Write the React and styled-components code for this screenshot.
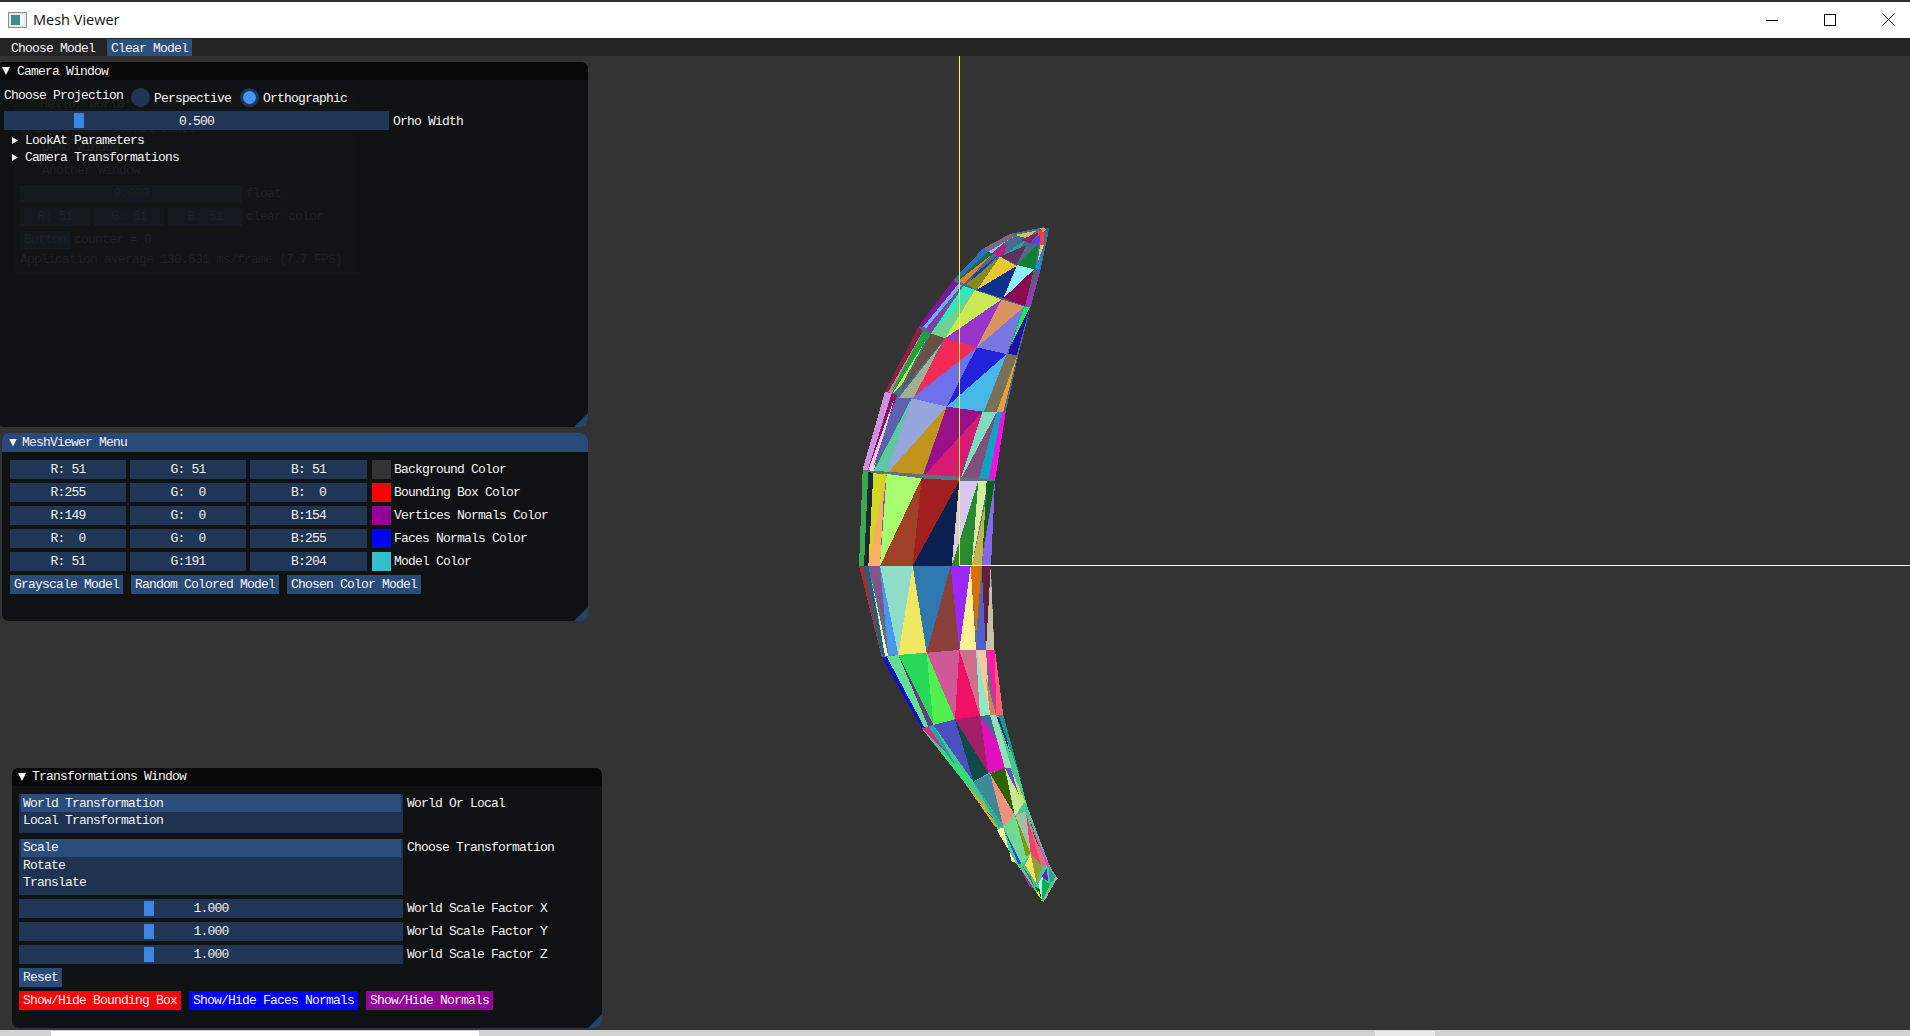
import React from "react";
import styled, { createGlobalStyle } from "styled-components";

const Global = createGlobalStyle`
  html, body { margin: 0; padding: 0; height: 100%; overflow: hidden; background: #333; }
  #root { height: 100%; }
`;

const Shell = styled.div`
  height: 1036px; width: 1910px; display: flex; flex-direction: column;
  font-family: "Liberation Mono", monospace; font-size: 13px; letter-spacing: -0.8px; color: #f2f2f2;
`;
const TitleBar = styled.header`
  height: 38px; box-sizing: border-box; flex: none; background: #fff; border-top: 2px solid #2e2e2e;
  display: flex; align-items: center; padding-left: 8px; color: #111;
  font-family: "Open Sans", sans-serif; font-size: 14.5px; letter-spacing: 0;
`;
const AppName = styled.span` margin-left: 6px; flex: 1; margin-top: -2px; `;
const WinButton = styled.button`
  width: 58px; height: 36px; border: 0; background: none; padding: 0; display: flex; align-items: center; justify-content: center;
`;
const WinButtons = styled.div` display: flex; margin-right: -7px; margin-top: -1px; `;

const MenuBar = styled.nav`
  height: 18px; flex: none; background: #242424; display: flex; gap: 8px; padding-left: 7px;
`;
const MenuItem = styled.span`
  padding: 0 4px; height: 17px; margin-top: 1px; line-height: 19px; white-space: pre;
  background: ${p => (p.$active ? "#2c4f80" : "transparent")};
`;
const Canvas = styled.main` flex: 1; position: relative; overflow: hidden; background: #333; `;
const Scene = styled.svg` position: absolute; inset: 0; width: 100%; height: 100%; `;
const ScrollTrack = styled.div`
  height: 6px; flex: none; background: #d2d2d2; display: flex; padding-top: 1px; box-sizing: border-box;
`;
const ScrollThumb = styled.div`
  height: 5px; width: ${p => p.$w}px; margin-left: ${p => p.$ml}px; background: ${p => p.$c};
`;

const Win = styled.section`
  position: absolute; box-sizing: border-box; overflow: hidden;
  left: ${p => p.$l}px; top: ${p => p.$t}px; width: ${p => p.$w}px; height: ${p => p.$h}px;
  background: #101113; border-radius: 7px;
`;
const WinTitle = styled.div`
  height: ${p => p.$h || 18}px; background: ${p => (p.$active ? "#29497b" : "#080808")};
  display: flex; align-items: center; padding-left: ${p => p.$caret}px; line-height: 20px; white-space: pre;
`;
const TitleText = styled.span` margin-top: 1px; `;
const Caret = styled.i`
  width: 8px; height: 8px; background: #f4f4f4; clip-path: polygon(0 0, 100% 0, 50% 100%); margin-right: ${p => p.$gap}px; flex: none;
`;
const WinBody = styled.div`
  position: relative; display: flex; flex-direction: column; padding: ${p => p.$pt}px 0 0 ${p => p.$pl}px; gap: 4px;
`;
const Grip = styled.i`
  position: absolute; right: 0; bottom: 0; width: 14px; height: 14px; background: #234468;
  clip-path: polygon(100% 0, 100% 100%, 0 100%);
`;

const Row = styled.div`
  display: flex; align-items: center; height: ${p => p.$h || 19}px; gap: 4px; white-space: pre; position: relative; z-index: 1;
`;
const Label = styled.span` line-height: 19px; white-space: pre; margin-top: ${p => p.$dy || 0}px; `;
const ProjectionLabel = styled(Label)` margin-top: -5px; margin-right: 4px; `;
const RadioDot = styled.span`
  width: 19px; height: 19px; border-radius: 50%; background: #203556; display: flex; align-items: center; justify-content: center; flex: none;
  &::after { content: ""; width: 13px; height: 13px; border-radius: 50%; background: ${p => (p.$on ? "#4296fa" : "transparent")}; }
`;
const RadioGroup = styled.span` display: flex; align-items: center; gap: 3px; margin-right: 5px; `;
const RadioText = styled.span` margin-top: 1px; margin-left: 1px; `;
const Track = styled.div`
  position: relative; width: ${p => p.$w}px; height: 19px; background: #213554; flex: none; box-sizing: border-box;
  padding-top: ${p => p.$dy || 0}px;
  display: flex; align-items: center; justify-content: center; line-height: 19px;
`;
const Grab = styled.i`
  position: absolute; top: 2px; height: 15px; width: 10px; left: ${p => p.$x}px; background: #3d85e0;
`;
const Tree = styled.div` display: flex; flex-direction: column; margin-top: -2px; position: relative; z-index: 1; `;
const TreeNode = styled.div` height: 17px; line-height: 18px; display: flex; align-items: center; padding-left: 8px; white-space: pre; `;
const TreeArrow = styled.i`
  width: 6px; height: 7px; background: #f4f4f4; clip-path: polygon(0 0, 100% 50%, 0 100%); margin-right: 7px; flex: none;
`;
const Cell = styled.div`
  width: ${p => p.$w || 116}px; height: 19px; background: #213554; text-align: center; line-height: 19px; white-space: pre; flex: none;
`;
const Swatch = styled.i` width: 19px; height: 19px; background: ${p => p.$c}; flex: none; margin-left: 1px; margin-right: -1px; `;
const Btn = styled.button`
  font: inherit; letter-spacing: inherit; color: #f4f4f4; border: 0; height: 19px; padding: 0 4px; width: ${p => p.$w}px; white-space: pre; text-align: center;
  background: ${p => p.$c || "#2a4a78"}; flex: none;
`;
const BtnRow = styled.div` display: flex; gap: 8px; `;
const List = styled.div`
  width: 384px; height: ${p => p.$h}px; background: #1f3350; padding: 0 2px; box-sizing: border-box; flex: none;
`;
const ListItem = styled.div`
  height: 17px; line-height: 17px; padding-left: 2px; white-space: pre; background: ${p => (p.$on ? "#2b4d7e" : "transparent")};
  &:first-child { height: 18px; line-height: ${p => p.$lh || 19}px; }
`;
const ListRow = styled.div` display: flex; gap: 4px; align-items: flex-start; margin-bottom: ${p => p.$mb || 0}px; line-height: ${p => p.$lh || 19}px; white-space: pre; `;

const Ghost = styled.div`
  position: absolute; left: 17px; top: 16px; width: 345px; height: 178px; background: #121315; color: #1f2022;
  display: flex; flex-direction: column; padding-left: 6px; box-sizing: border-box;
`;
const GhostLine = styled.div`
  height: 18px; line-height: 18px; margin-top: ${p => p.$mt || 0}px; padding-left: ${p => p.$pl || 0}px; white-space: pre; display: flex; gap: 4px;
`;
const GhostBox = styled.span`
  width: ${p => p.$w}px; background: #14181f; text-align: center; display: block; height: 18px;
`;

const g1 = [
  ["#4a6a90","610,52 510,72 430,115 340,210 235,350 135,545 68,780 85,812 465,812 497,607 535,435 572,290 602,178 628,55"],
  ["#cf8fe0","135,545 155,550 82,785 68,778"],["#8a1860","155,550 172,556 100,745 88,765"],["#efc8ec","165,560 100,785 85,785 92,760"],
  ["#6060b0","172,556 215,565 100,770"],["#5cc8a0","215,565 100,785 140,792"],["#97a5dd","215,565 320,590 140,792"],
  ["#c2941c","320,590 245,805 140,792"],["#9a0f8a","320,590 428,605 248,802"],["#d81b72","428,605 358,812 245,805"],
  ["#7fdcc0","428,605 470,607 360,812"],["#80507a","470,607 415,812 360,812"],["#12a0c4","470,607 485,607 445,812 415,812"],
  ["#f010e0","485,607 497,607 465,812 445,812"],
  ["#8a2048","235,350 248,362 150,545 135,545"],["#b09070","248,365 155,550 145,545"],["#20a040","250,362 272,372 170,525 155,542"],
  ["#b0f040","255,395 158,550 185,525"],["#6a5040","272,372 315,385 185,540"],["#a0b090","305,400 175,565 220,565"],
  ["#f52a55","315,385 410,412 220,565"],["#7070e8","410,412 320,590 215,565"],["#2222dd","410,412 500,432 320,590"],
  ["#45b8e8","500,432 432,605 320,590"],["#7a7058","500,432 532,436 475,605 432,605"],["#e8a030","532,436 490,605 470,605"],
  ["#7a1a9a","340,210 355,222 250,350 235,350"],["#6ab0f0","355,222 366,226 258,355 250,350"],["#8a3aa0","366,226 272,368 258,355"],
  ["#30e8c0","370,228 405,240 275,368"],["#70d090","405,240 315,385 272,370"],["#c8e855","405,240 485,268 315,385"],
  ["#9a35cc","485,268 410,412 315,385"],["#d89560","485,268 553,290 410,412"],["#7a78e0","553,290 500,432 410,412"],
  ["#10f050","553,290 570,290 510,412"],["#2010a0","570,290 530,435 505,432 510,412"],
  ["#2a70c0","430,115 445,125 355,205 340,210"],["#1a6a40","445,125 460,130 370,205 355,208"],["#e08030","460,130 370,222 355,212"],
  ["#1040b0","475,135 385,225 400,195"],["#8a8a10","480,140 380,222 408,240"],["#e8c830","480,140 530,168 410,240"],
  ["#103090","530,168 490,265 410,240"],["#90f0ff","595,105 582,178 490,265 530,168"],["#8a0a50","582,178 555,288 490,265"],
  ["#a030c0","582,178 600,178 570,290 555,288"],["#208050","582,178 594,180 565,265"],
  ["#7a6a80","430,115 510,72 530,75 445,125"],["#8fb8e8","445,125 530,75 490,100 455,130"],["#c01880","455,130 500,100 490,140"],
  ["#20a8a0","490,135 560,88 540,115"],["#603060","480,140 560,105 530,165"],["#108030","530,165 595,100 585,178"],
  ["#d0c060","525,75 590,62 560,85"],["#8a2070","540,90 600,66 570,100"],
  ["#f04040","592,65 612,60 612,105 600,105"],["#6040e0","570,100 600,75 598,105"],["#e09070","600,55 620,55 610,68"],
  ["#207050","615,55 628,55 625,68"],["#e0c080","600,105 612,105 590,178"],["#1890d0","612,105 600,178 585,178"],
];
const g2 = [
  ["#607080","68,-30 465,-2 453,258 463,510 490,705 245,745 125,530 57,258"],
  ["#3aa850","68,-30 85,-25 72,258 57,258"],["#1a2a30","85,-25 100,-20 85,258 72,258"],["#d0d820","100,-20 140,-18 105,258 85,258"],
  ["#f8b060","135,-18 120,258 85,258"],["#a8ff70","140,-18 245,-5 120,258"],["#a04028","245,-5 218,258 120,258"],
  ["#a02020","245,-5 358,2 218,258"],["#0a2050","358,2 335,258 218,258"],["#d8c8f0","358,2 415,2 335,258"],
  ["#2a8a30","415,2 395,258 335,258"],["#d0f0a0","415,2 445,2 395,258"],["#c8b050","445,30 425,258 395,258"],
  ["#0a6020","440,2 465,2 428,220"],["#8866ee","465,2 453,258 425,258"],
  ["#a03030","57,258 72,258 125,525"],["#206080","72,258 85,258 135,528 125,525"],["#80558a","85,258 120,258 145,470"],
  ["#f6f0b0","95,300 145,530 135,528"],["#4898f0","120,258 175,525 145,528"],["#90dcc8","120,258 218,258 175,525"],
  ["#f0e860","218,258 260,518 175,525"],["#2e78b0","218,258 332,258 260,518"],["#8a4038","332,258 358,510 260,518"],
  ["#9a28ff","332,258 392,258 358,510"],["#fff090","392,258 408,510 358,510"],["#d87000","392,258 425,258 408,470"],
  ["#5060d0","425,300 438,510 408,510"],["#602040","425,258 452,258 438,510 432,400"],["#c8c0a0","452,262 463,510 438,510"],
  ["#0a10d0","125,530 140,530 255,745 245,745"],["#60e090","140,530 175,525 265,740 255,745"],["#6a3a8a","175,525 185,530 280,735 265,740"],
  ["#28d858","175,525 260,518 280,735"],["#50f050","260,518 345,718 280,735"],["#d05898","260,518 358,510 345,718"],
  ["#f01068","358,510 420,708 345,718"],["#d07088","358,510 408,510 420,708"],["#90e8c0","408,510 450,705 420,708"],
  ["#f8c8a0","408,510 438,510 450,705"],["#d08060","438,590 468,705 450,705"],["#ff1ca8","438,510 465,510 468,705"],["#ff6070","465,510 490,705 468,705"],
];
const g3 = [
  ["#46c890","-55,-35 190,-75 262,200 330,380 352,415 310,487 228,370 175,270 75,130"],
  ["#d8288a","-55,-35 -35,-40 40,60 20,40"],["#20a8a0","-35,-40 -20,-45 75,125 50,85"],
  ["#30e070","0,30 100,125 75,130"],
  ["#4a50c0","-20,-45 45,-62 100,125"],["#104a48","45,-62 145,100 100,125"],["#a02068","45,-62 120,-72 145,100"],
  ["#e010c0","120,-72 150,-75 195,85 145,100"],["#406a90","120,-72 150,-75 170,0"],["#90e0b0","150,-75 168,-75 215,85 195,85"],
  ["#103080","170,-70 185,-70 210,40"],["#209090","175,-75 190,-75 262,190 240,110"],
  ["#c0b030","75,130 130,190 175,265 165,260"],["#b02030","100,170 185,265 160,235"],["#30b090","100,125 190,262 175,260"],
  ["#3a8a98","100,125 150,100 190,260"],["#306000","150,100 195,85 225,225"],["#f09080","150,100 225,225 190,260"],
  ["#c8e890","195,85 250,190 225,230"],["#6050d0","195,85 212,85 240,170"],["#d0e060","212,85 258,190 245,190"],
  ["#70d890","190,260 225,225 270,345 245,372"],["#7a9a10","225,225 272,340 258,350"],["#a0c0a8","225,225 258,215 272,340"],
  ["#f04070","258,220 305,380 272,340"],["#a01020","270,240 300,320 290,320"],["#e07070","270,260 320,375 305,382"],
  ["#e040e0","260,225 330,380 322,380"],["#2050e0","190,265 245,372 235,372"],["#fff0a0","170,270 228,368 215,365 190,262"],
  ["#f8e060","272,340 290,432 255,375"],["#90a030","272,340 305,382 290,432"],["#a020a0","235,375 280,445 268,440"],
  ["#607050","245,375 285,445 272,410"],["#a0f8f0","310,405 295,430 305,485"],["#10b050","308,410 330,435 305,485"],
  ["#6a20d0","320,385 325,425 305,410"],["#e090b0","330,435 310,485 322,470"],["#30a090","325,380 350,415 330,430"],
  ["#106030","285,440 305,480 298,445"],["#e8e020","295,450 305,480 290,460"],["#c0a0a0","345,410 355,415 340,425"],
];

const MeshGroup = ({ x, y, tris }) => (
  <g transform={`translate(${x} ${y}) scale(${1 / 3})`} shapeRendering="crispEdges">
    {tris.map(([c, p], i) => <polygon key={i} points={p} fill={c} />)}
  </g>
);

const Slider = ({ w, x, v, dy }) => <Track $w={w} $dy={dy}><Grab $x={x} />{v}</Track>;

const colorRows = [
  ["R: 51","G: 51","B: 51","#333333","Background Color"],
  ["R:255","G:  0","B:  0","#ff0000","Bounding Box Color"],
  ["R:149","G:  0","B:154","#95009a","Vertices Normals Color"],
  ["R:  0","G:  0","B:255","#0000ff","Faces Normals Color"],
  ["R: 51","G:191","B:204","#33bfcc","Model Color"],
];

export default function App() {
  return (
    <>
      <Global />
      <Shell>
        <TitleBar>
          <svg width="19" height="16" viewBox="0 0 19 16">
            <rect x="0.5" y="0.5" width="18" height="15" fill="#e8e8e8" stroke="#8a8f92" />
            <rect x="3" y="3" width="9" height="10" fill="#3c8f86" />
            <rect x="12" y="3" width="4" height="10" fill="#f6f6f6" />
          </svg>
          <AppName>Mesh Viewer</AppName>
          <WinButtons>
            <WinButton aria-label="minimize"><svg width="12" height="12"><path d="M0 6.5H12" stroke="#111" /></svg></WinButton>
            <WinButton aria-label="maximize"><svg width="12" height="12"><rect x="0.5" y="0.5" width="11" height="11" fill="none" stroke="#111" /></svg></WinButton>
            <WinButton aria-label="close"><svg width="13" height="13"><path d="M0.5 0.5L12.5 12.5M12.5 0.5L0.5 12.5" stroke="#111" /></svg></WinButton>
          </WinButtons>
        </TitleBar>
        <MenuBar>
          <MenuItem>Choose Model</MenuItem>
          <MenuItem $active>Clear Model</MenuItem>
        </MenuBar>
        <Canvas>
          <Scene viewBox="0 56 1910 974">
            <MeshGroup x={840} y={210} tris={g1} />
            <MeshGroup x={840} y={480} tris={g2} />
            <MeshGroup x={940} y={740} tris={g3} />
            <path d="M959.5 56V565" stroke="#ffff33" strokeWidth="1" />
            <path d="M959 565.5H1910" stroke="#fff" strokeWidth="1" />
          </Scene>

          <Win $l={-3} $t={6} $w={591} $h={365}>
            <WinTitle $caret={5} ><Caret $gap={7} /><TitleText>Camera Window</TitleText></WinTitle>
            <WinBody $pt={8} $pl={7}>
              <Ghost>
                <GhostLine $pl={20}>Hello, world!</GhostLine>
                <GhostLine $mt={6}>This is some useful text.</GhostLine>
                <GhostLine $mt={1} $pl={22}>Demo Window</GhostLine>
                <GhostLine $mt={5} $pl={22}>Another Window</GhostLine>
                <GhostLine $mt={5}><GhostBox $w={222}>0.000</GhostBox>float</GhostLine>
                <GhostLine $mt={5}><GhostBox $w={70}>R: 51</GhostBox><GhostBox $w={70}>G: 51</GhostBox><GhostBox $w={74}>B: 51</GhostBox>clear color</GhostLine>
                <GhostLine $mt={5}><GhostBox $w={50}>Button</GhostBox>counter = 0</GhostLine>
                <GhostLine $mt={2}>Application average 130.631 ms/frame (7.7 FPS)</GhostLine>
              </Ghost>
              <Row>
                <ProjectionLabel>Choose Projection</ProjectionLabel>
                <RadioGroup><RadioDot /><RadioText>Perspective</RadioText></RadioGroup>
                <RadioGroup><RadioDot $on /><RadioText>Orthographic</RadioText></RadioGroup>
              </Row>
              <Row>
                <Slider w={385} x={70} v="0.500" dy={1} />
                <Label $dy={1}>Orho Width</Label>
              </Row>
              <Tree>
                <TreeNode><TreeArrow />LookAt Parameters</TreeNode>
                <TreeNode><TreeArrow />Camera Transformations</TreeNode>
              </Tree>
            </WinBody>
            <Grip />
          </Win>

          <Win $l={2} $t={377} $w={586} $h={188}>
            <WinTitle $active $h={19} $caret={7}><Caret $gap={5} />MeshViewer Menu</WinTitle>
            <WinBody $pt={8} $pl={8}>
              {colorRows.map(([r, g, b, c, l]) => (
                <Row key={l}>
                  <Cell>{r}</Cell><Cell>{g}</Cell><Cell $w={117}>{b}</Cell>
                  <Swatch $c={c} /><Label>{l}</Label>
                </Row>
              ))}
              <BtnRow>
                <Btn $w={113}>Grayscale Model</Btn>
                <Btn $w={148}>Random Colored Model</Btn>
                <Btn $w={134}>Chosen Color Model</Btn>
              </BtnRow>
            </WinBody>
            <Grip />
          </Win>

          <Win $l={12} $t={712} $w={590} $h={260}>
            <WinTitle $caret={6}><Caret $gap={6} />Transformations Window</WinTitle>
            <WinBody $pt={8} $pl={7}>
              <ListRow $mb={2}>
                <List $h={39}>
                  <ListItem $on>World Transformation</ListItem>
                  <ListItem>Local Transformation</ListItem>
                </List>
                World Or Local
              </ListRow>
              <ListRow $lh={18}>
                <List $h={56}>
                  <ListItem $on $lh={18}>Scale</ListItem>
                  <ListItem>Rotate</ListItem>
                  <ListItem>Translate</ListItem>
                </List>
                Choose Transformation
              </ListRow>
              {["X", "Y", "Z"].map(a => (
                <Row key={a}>
                  <Slider w={384} x={125} v="1.000" />
                  <Label>World Scale Factor {a}</Label>
                </Row>
              ))}
              <BtnRow><Btn $w={43} $c="#2a4a78">Reset</Btn></BtnRow>
              <BtnRow>
                <Btn $w={162} $c="#ff0000">Show/Hide Bounding Box</Btn>
                <Btn $w={169} $c="#0000ff">Show/Hide Faces Normals</Btn>
                <Btn $w={127} $c="#95009a">Show/Hide Normals</Btn>
              </BtnRow>
            </WinBody>
            <Grip />
          </Win>
        </Canvas>
        <ScrollTrack>
          <ScrollThumb $ml={51} $w={428} $c="#fff" />
          <ScrollThumb $ml={896} $w={60} $c="#ebebeb" />
        </ScrollTrack>
      </Shell>
    </>
  );
}
